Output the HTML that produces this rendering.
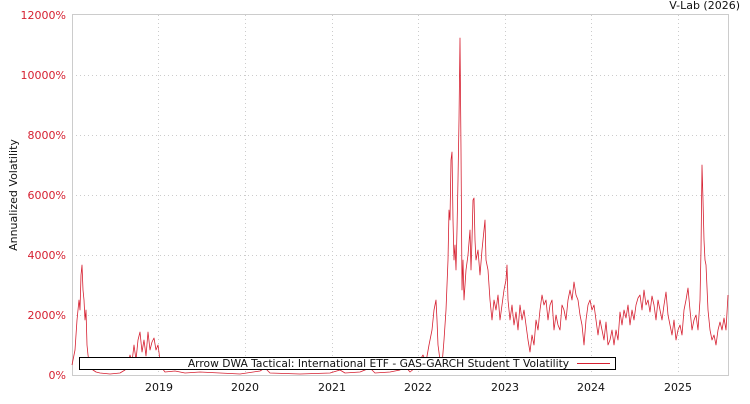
<!DOCTYPE html>
<html><head><meta charset="utf-8"><style>
body{margin:0;background:#fff;width:750px;height:400px;overflow:hidden;font-family:"DejaVu Sans","Liberation Sans",sans-serif}
svg text{font-family:"DejaVu Sans","Liberation Sans",sans-serif;font-size:11px}
</style></head><body>
<svg width="750" height="400" xmlns="http://www.w3.org/2000/svg">
<g stroke="#ccc" stroke-dasharray="1,3" stroke-width="1">
<line x1="72" y1="75.5" x2="728" y2="75.5"/><line x1="72" y1="135.5" x2="728" y2="135.5"/><line x1="72" y1="195.5" x2="728" y2="195.5"/><line x1="72" y1="255.5" x2="728" y2="255.5"/><line x1="72" y1="315.5" x2="728" y2="315.5"/>
<line x1="158.5" y1="15" x2="158.5" y2="375"/><line x1="245.5" y1="15" x2="245.5" y2="375"/><line x1="332.5" y1="15" x2="332.5" y2="375"/><line x1="418.5" y1="15" x2="418.5" y2="375"/><line x1="505.5" y1="15" x2="505.5" y2="375"/><line x1="591.5" y1="15" x2="591.5" y2="375"/><line x1="678.5" y1="15" x2="678.5" y2="375"/>
</g>
<rect x="72.5" y="14.5" width="656" height="361" fill="none" stroke="#ccc"/>
<polyline fill="none" stroke="#d62031" stroke-width="0.8" stroke-linejoin="round" points="
72,365 75,350 77,320 79,300 80,310 81,275 82,265 83,290 84,300 85,320 86,310 87,345 88,355 90,368 93,370 96,372 100,373 110,374 120,373 125,370 128,365 130,355 132,362 134,345 136,360 138,340 140,332 142,352 144,340 146,356 148,332 150,350 152,342 154,338 156,350 158,345 160,360 162,368 165,372 175,371 185,373 200,372 220,373 240,374 260,371 265,368 270,373 300,374 330,373 340,370 345,373 360,372 370,368 375,373 390,372 400,370 405,366 410,372 415,368 420,360 423,355 426,362 429,345 432,330 434,310 436,300 437,320 438,345 440,360 442,365 444,340 446,310 448,260 449,210 450,220 451,160 452,152 453,220 454,260 455,245 456,270 457,230 458,180 459,120 460,38 461,150 462,290 463,260 464,300 466,270 468,255 470,230 471,270 472,240 473,200 474,198 475,240 476,260 478,250 480,275 482,250 484,230 485,220 486,260 488,270 490,300 492,320 494,300 496,310 498,295 500,320 502,305 504,290 506,280 507,265 508,300 510,320 512,305 514,325 516,312 518,330 520,305 522,320 524,310 526,325 528,340 530,352 532,335 534,345 536,320 538,330 540,310 542,295 544,305 546,300 548,320 550,305 552,300 554,330 556,315 558,325 560,330 562,305 564,310 566,320 568,300 570,290 572,300 574,282 576,295 578,300 580,315 582,325 584,345 586,320 588,305 590,300 592,310 594,305 596,320 598,335 600,320 602,330 604,340 606,322 608,345 610,340 612,330 614,345 616,330 618,340 620,312 622,325 624,310 626,318 628,305 630,325 632,310 634,320 636,305 638,298 640,295 642,310 644,290 646,305 648,300 650,312 652,296 654,305 656,320 658,300 660,310 662,320 664,305 666,292 668,315 670,325 672,335 674,320 676,340 678,330 680,325 682,335 684,310 686,300 688,288 690,310 692,330 694,320 696,315 698,330 700,300 701,250 702,165 703,200 704,240 705,260 706,265 708,310 710,330 712,340 714,335 716,345 718,330 720,322 722,330 724,318 726,330 728,295"/>
<g fill="#d62031" text-anchor="end">
<text x="66" y="19">12000%</text><text x="66" y="79">10000%</text><text x="66" y="139">8000%</text><text x="66" y="199">6000%</text><text x="66" y="259">4000%</text><text x="66" y="319">2000%</text><text x="66" y="379">0%</text>
</g>
<g fill="#111" text-anchor="middle">
<text x="159" y="391">2019</text><text x="245" y="391">2020</text><text x="332" y="391">2021</text><text x="418" y="391">2022</text><text x="505" y="391">2023</text><text x="591" y="391">2024</text><text x="678" y="391">2025</text>
</g>
<text x="740" y="9" text-anchor="end" fill="#111">V-Lab (2026)</text>
<text transform="translate(17,195) rotate(-90)" text-anchor="middle" fill="#111">Annualized Volatility</text>
<rect x="79.5" y="357.5" width="536" height="12" fill="#fff" stroke="#000"/>
<text x="378.5" y="367" text-anchor="middle" fill="#111" style="font-size:10.7px">Arrow DWA Tactical: International ETF - GAS-GARCH Student T Volatility</text>
<line x1="577" y1="363.5" x2="610" y2="363.5" stroke="#d62031"/>
</svg>
</body></html>
